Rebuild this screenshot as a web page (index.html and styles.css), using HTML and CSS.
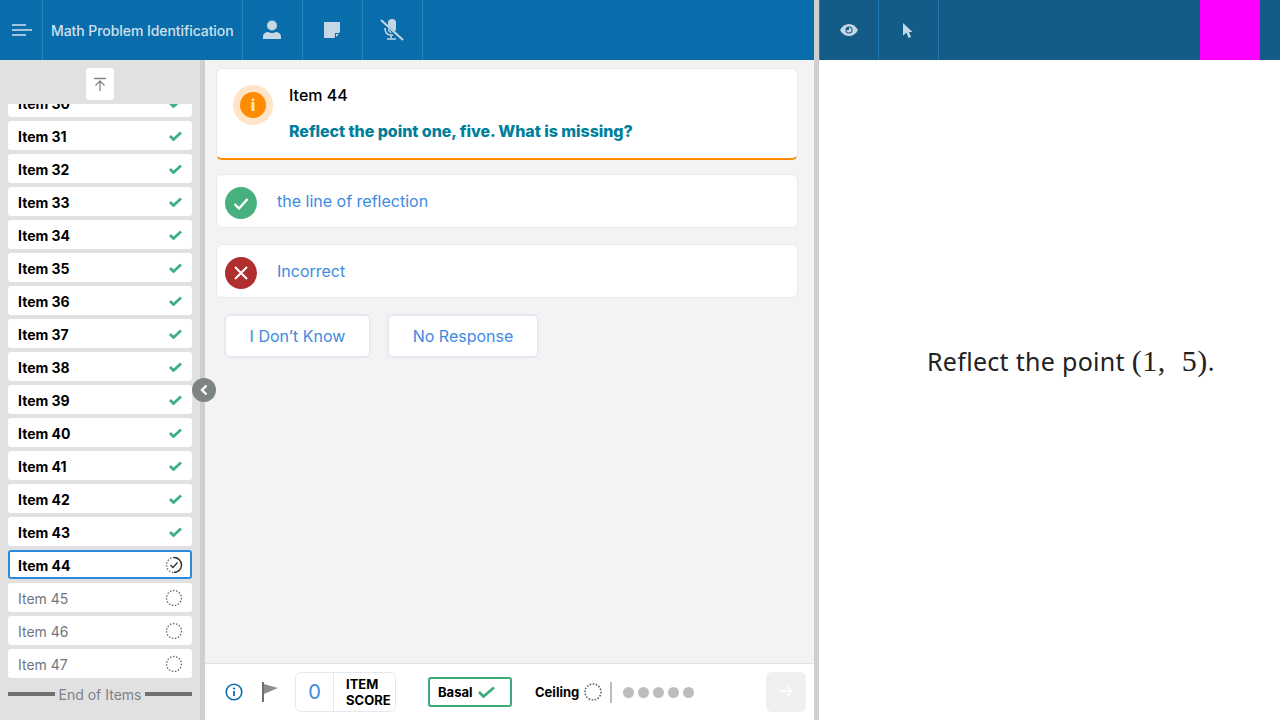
FILE: index.html
```html
<!DOCTYPE html>
<html lang="en">
<head>
  <meta charset="UTF-8" />
  <title>Math Problem Identification</title>
  <link rel="stylesheet" href="styles.css">
</head>
<body>
  <header class="topbar">
    <div class="topbar-left">
      <div class="tool tool-menu">
        <svg width="20" height="12" viewBox="0 0 20 12"><path d="M0 1h14M0 6h20M0 11h14" stroke="#cfe0ec" stroke-width="1.6" fill="none"/></svg>
      </div>
      <div class="app-title">Math Problem Identification</div>
      <div class="tool">
        <svg width="20" height="20" viewBox="0 0 20 20"><circle cx="10" cy="5.5" r="5" fill="#c5d6e4"/><path d="M1 19v-2.500c0-3 3-4.500 5-4.500 2.500 1.300 5.500 1.300 8 0 2 0 5 1.500 5 4.500V19z" fill="#c5d6e4"/></svg>
      </div>
      <div class="tool">
        <svg width="18" height="18" viewBox="0 0 18 18"><path d="M1 1h16v10l-6 6H1z" fill="#c5d6e4"/><path d="M12 17v-5h5z" fill="#0a6dab"/><path d="M13 16v-3h3z" fill="#c5d6e4"/></svg>
      </div>
      <div class="tool">
        <svg width="26" height="24" viewBox="0 0 26 24"><path d="M9 5a4 4 0 0 1 8 0v6a4 4 0 0 1-1 2.500L9 7z" fill="#c5d6e4"/><path d="M9 10v2a4 4 0 0 0 4 3z" fill="#c5d6e4"/><path d="M6 10c0 4 2 7 6 7h2M12 17v3M8 21h9" stroke="#c5d6e4" stroke-width="1.600" fill="none"/><path d="M2 2l22 20" stroke="#c5d6e4" stroke-width="2"/></svg>
      </div>
    </div>
    <div class="bar-gap"></div>
    <div class="topbar-right">
      <div class="tool tool-view">
        <svg width="18" height="12" viewBox="0 0 18 12"><path d="M0 6c2-4 5.500-6 9-6s7 2 9 6c-2 4-5.500 6-9 6s-7-2-9-6z" fill="#c5d6e4"/><circle cx="9" cy="6" r="3.500" fill="#135c88"/><path d="M9 3.500a2.500 2.500 0 1 1-2.500 2.500H9z" fill="#c5d6e4"/></svg>
      </div>
      <div class="tool tool-view">
        <svg width="10" height="15" viewBox="0 0 10 15"><path d="M0 0l9.500 9H6l2 5-2.500 1-2-5.200L0 12.500z" fill="#c5d6e4"/></svg>
      </div>
      <div class="magenta"></div>
    </div>
  </header>

  <div class="workspace">
    <aside class="sidebar">
      <div class="top-row">
        <button class="to-top">
          <svg width="14" height="14" viewBox="0 0 14 14"><path d="M1 1.500h12M7 14V4.500M2.500 8.500L7 4l4.500 4.500" stroke="#858585" stroke-width="1.300" fill="none"/></svg>
        </button>
      </div>
      <div class="item-scroll">
        <ul class="item-list">
          <li class="item done">Item 30<svg class="tick" width="13" height="10" viewBox="0 0 13 10"><path d="M1 5l3.500 3.500L12 1.500" /></svg></li>
          <li class="item done">Item 31<svg class="tick" width="13" height="10" viewBox="0 0 13 10"><path d="M1 5l3.500 3.500L12 1.500" /></svg></li>
          <li class="item done">Item 32<svg class="tick" width="13" height="10" viewBox="0 0 13 10"><path d="M1 5l3.500 3.500L12 1.500" /></svg></li>
          <li class="item done">Item 33<svg class="tick" width="13" height="10" viewBox="0 0 13 10"><path d="M1 5l3.500 3.500L12 1.500" /></svg></li>
          <li class="item done">Item 34<svg class="tick" width="13" height="10" viewBox="0 0 13 10"><path d="M1 5l3.500 3.500L12 1.500" /></svg></li>
          <li class="item done">Item 35<svg class="tick" width="13" height="10" viewBox="0 0 13 10"><path d="M1 5l3.500 3.500L12 1.500" /></svg></li>
          <li class="item done">Item 36<svg class="tick" width="13" height="10" viewBox="0 0 13 10"><path d="M1 5l3.500 3.500L12 1.500" /></svg></li>
          <li class="item done">Item 37<svg class="tick" width="13" height="10" viewBox="0 0 13 10"><path d="M1 5l3.500 3.500L12 1.500" /></svg></li>
          <li class="item done">Item 38<svg class="tick" width="13" height="10" viewBox="0 0 13 10"><path d="M1 5l3.500 3.500L12 1.500" /></svg></li>
          <li class="item done">Item 39<svg class="tick" width="13" height="10" viewBox="0 0 13 10"><path d="M1 5l3.500 3.500L12 1.500" /></svg></li>
          <li class="item done">Item 40<svg class="tick" width="13" height="10" viewBox="0 0 13 10"><path d="M1 5l3.500 3.500L12 1.500" /></svg></li>
          <li class="item done">Item 41<svg class="tick" width="13" height="10" viewBox="0 0 13 10"><path d="M1 5l3.500 3.500L12 1.500" /></svg></li>
          <li class="item done">Item 42<svg class="tick" width="13" height="10" viewBox="0 0 13 10"><path d="M1 5l3.500 3.500L12 1.500" /></svg></li>
          <li class="item done">Item 43<svg class="tick" width="13" height="10" viewBox="0 0 13 10"><path d="M1 5l3.500 3.500L12 1.500" /></svg></li>
          <li class="item current">Item 44
            <svg class="ring" width="18" height="18" viewBox="0 0 18 18"><circle cx="9" cy="9" r="7.500" class="dots"/><path d="M9 1.500a7.500 7.500 0 0 1 0 15" class="arc"/><path d="M5.500 9l2.500 2.500 4.500-5" class="arc"/></svg>
          </li>
          <li class="item">Item 45<svg class="ring" width="18" height="18" viewBox="0 0 18 18"><circle cx="9" cy="9" r="7.500" class="dots"/></svg></li>
          <li class="item">Item 46<svg class="ring" width="18" height="18" viewBox="0 0 18 18"><circle cx="9" cy="9" r="7.500" class="dots"/></svg></li>
          <li class="item">Item 47<svg class="ring" width="18" height="18" viewBox="0 0 18 18"><circle cx="9" cy="9" r="7.500" class="dots"/></svg></li>
        </ul>
      </div>
      <div class="end-row"><span class="end-line"></span>End of Items<span class="end-line"></span></div>
    </aside>

    <div class="v-divider">
      <div class="collapse">
        <svg width="10" height="12" viewBox="0 0 10 12"><path d="M7.500 1.500L3 6l4.500 4.500" stroke="#fff" stroke-width="2.400" fill="none"/></svg>
      </div>
    </div>

    <main class="main">
      <div class="content">
        <section class="question-card">
          <div class="halo"><div class="info-dot">i</div></div>
          <div class="question-text">
            <div class="question-item">Item 44</div>
            <div class="question-prompt">Reflect the point one, five. What is missing?</div>
          </div>
        </section>

        <div class="answer">
          <span class="badge badge-ok">
            <svg width="16" height="13" viewBox="0 0 16 13"><path d="M1.500 7l4.500 4.500L14.500 2" stroke="#fff" stroke-width="2.400" fill="none"/></svg>
          </span>
          the line of reflection
        </div>
        <div class="answer">
          <span class="badge badge-bad">
            <svg width="14" height="14" viewBox="0 0 14 14"><path d="M1 1l12 12M13 1L1 13" stroke="#fff" stroke-width="2" fill="none"/></svg>
          </span>
          Incorrect
        </div>

        <div class="choices">
          <button class="choice choice-a">I Don’t Know</button>
          <button class="choice choice-b">No Response</button>
        </div>
      </div>

      <footer class="footer">
        <svg class="foot-info" width="18" height="18" viewBox="0 0 18 18"><circle cx="9" cy="9" r="7.800" stroke="#0a6dab" stroke-width="1.600" fill="none"/><circle cx="9" cy="5.500" r="1.100" fill="#0a6dab"/><path d="M9 8v5" stroke="#0a6dab" stroke-width="1.800"/></svg>
        <svg class="foot-flag" width="16" height="20" viewBox="0 0 16 20"><path d="M1 0v20" stroke="#6f6f6f" stroke-width="2"/><path d="M2 2l14 4-14 6z" fill="#8f8f8f"/></svg>
        <div class="score-box">
          <div class="score-value">0</div>
          <div class="score-label">ITEM<br>SCORE</div>
        </div>
        <div class="basal">Basal
          <svg width="17" height="12" viewBox="0 0 17 12"><path d="M1 6l4.500 4.500L16 1.500" stroke="#3fa97c" stroke-width="2.800" fill="none"/></svg>
        </div>
        <div class="ceiling">Ceiling
          <svg width="18" height="18" viewBox="0 0 18 18"><circle cx="9" cy="9" r="8" class="dots dots-heavy"/></svg>
        </div>
        <span class="foot-bar"></span>
        <div class="progress-dots"><i></i><i></i><i></i><i></i><i></i></div>
        <button class="next">
          <svg width="14" height="12" viewBox="0 0 14 12"><path d="M0 6h13M8 1l5 5-5 5" stroke="#fff" stroke-width="1.300" fill="none"/></svg>
        </button>
      </footer>
    </main>

    <div class="pane-gap"></div>

    <section class="stimulus">
      <p class="stimulus-text">Reflect the point <span class="math">(1, 5)</span>.</p>
    </section>
  </div>
</body>
</html>
```

FILE: styles.css
```css
* {
  box-sizing: border-box;
}
html, body {
  height: 100%;
}
body {
  margin: 0;
  height: 720px;
  overflow: hidden;
  font-family: Inter, 'Noto Sans', sans-serif;
  background: #fff;
  color: #000;
}
button {
  font-family: inherit;
  padding: 0;
  cursor: pointer;
}

/* top bar */
.topbar {
  display: flex;
  height: 60px;
}
.topbar-left {
  display: flex;
  width: 814px;
  background: #0a6dab;
}
.bar-gap {
  width: 5px;
  background: #cfcfcf;
}
.topbar-right {
  flex: 1;
  display: flex;
  background: #135c88;
  position: relative;
}
.tool {
  width: 60px;
  padding-right: 1px;
  display: flex;
  align-items: center;
  justify-content: center;
  border-right: 1px solid #2a83bb;
}
.tool-menu {
  width: 43px;
  padding: 0 0 0 1px;
}
.app-title {
  width: 200px;
  padding-left: 8px;
  display: flex;
  align-items: center;
  font-size: 14px;
  font-weight: 500;
  letter-spacing: -0.07px;
  color: #cfe0ec;
  white-space: nowrap;
  border-right: 1px solid #2a83bb;
}
.tool-view {
  border-right: 1px solid #1f7ab5;
}
.tool-view:first-child {
  border-left: 1px solid #1f7ab5;
}
.magenta {
  position: absolute;
  right: 20px;
  top: 0;
  width: 60px;
  height: 60px;
  background: #f0f;
}

/* page body */
.workspace {
  display: flex;
  height: 660px;
}
.sidebar {
  width: 200px;
  background: #e1e1e1;
  display: flex;
  flex-direction: column;
}
.top-row {
  height: 44px;
  padding-top: 8px;
  display: flex;
  justify-content: center;
}
.to-top {
  width: 28px;
  height: 32px;
  border: 0;
  border-radius: 3px;
  background: #fff;
  display: flex;
  align-items: center;
  justify-content: center;
}
.item-scroll {
  flex: 1;
  overflow: hidden;
  padding: 0 8px;
}
.item-list {
  list-style: none;
  margin: -16px 0 0;
  padding: 0;
}
.item {
  height: 29px;
  margin-bottom: 4px;
  padding: 1px 9px 0 10px;
  background: #fff;
  border-radius: 3px;
  display: flex;
  align-items: center;
  justify-content: space-between;
  font-size: 14px;
  color: #6f7780;
}
.item svg {
  margin-top: -1px;
}
.done {
  font-weight: 700;
  color: #000;
}
.current {
  font-weight: 700;
  color: #000;
  border: 2px solid #2a8bdc;
  padding: 1px 7px 0 8px;
}
.tick {
  margin-right: 1px;
}
.tick path {
  stroke: #3fb082;
  stroke-width: 2.800;
  fill: none;
}
.dots {
  fill: none;
  stroke: #666;
  stroke-width: 1.300;
  stroke-dasharray: 1.500 1.600;
}
.dots-heavy {
  stroke: #555;
  stroke-width: 1.500;
}
.arc {
  fill: none;
  stroke: #333;
  stroke-width: 1.400;
}
.end-row {
  height: 35px;
  padding: 0 8px 17px;
  display: flex;
  align-items: center;
  justify-content: space-between;
  font-size: 14px;
  color: #7b8288;
}
.end-line {
  width: 47px;
  height: 4px;
  background: #6c706f;
}
.v-divider {
  width: 5px;
  background: #cfcfcf;
  position: relative;
}
.collapse {
  position: absolute;
  left: -8px;
  top: 318px;
  width: 24px;
  height: 24px;
  border-radius: 50%;
  background: #7e8383;
  display: flex;
  align-items: center;
  justify-content: center;
}

/* question column */
.main {
  width: 609px;
  background: #f3f3f4;
  display: flex;
  flex-direction: column;
}
.content {
  flex: 1;
  padding: 8px 16px 0 11px;
}
.question-card {
  height: 92px;
  background: #fff;
  border: 1px solid #e4e8f0;
  border-bottom: 2px solid #ff8c00;
  border-radius: 6px;
  padding: 16px 16px 0;
  display: flex;
  gap: 16px;
}
.halo {
  width: 40px;
  height: 40px;
  border-radius: 50%;
  background: #ffe4c8;
  display: flex;
  align-items: center;
  justify-content: center;
}
.info-dot {
  width: 26px;
  height: 26px;
  border-radius: 50%;
  background: #ff8c00;
  color: #ffe4c8;
  font-size: 16px;
  font-weight: 800;
  text-align: center;
  line-height: 26px;
}
.question-item {
  font-size: 16px;
  font-weight: 500;
  line-height: 20px;
}
.question-prompt {
  margin-top: 16px;
  font-size: 16px;
  font-weight: 800;
  letter-spacing: -0.05px;
  line-height: 20px;
  color: #007f9b;
}
.answer {
  height: 54px;
  margin-top: 14px;
  background: #fff;
  border: 1px solid #e4e8f0;
  border-radius: 6px;
  padding-left: 8px;
  display: flex;
  align-items: center;
  gap: 20px;
  font-size: 16px;
  color: #3d8ae0;
}
.answer + .answer {
  margin-top: 16px;
}
.badge {
  width: 32px;
  height: 32px;
  margin-top: 4px;
  border-radius: 50%;
  display: flex;
  align-items: center;
  justify-content: center;
}
.badge-ok {
  background: #47b07f;
}
.badge-bad {
  background: #b02e2e;
}
.choices {
  display: flex;
  gap: 16px;
  margin-top: 16px;
  padding-left: 8px;
}
.choice {
  height: 44px;
  background: #fff;
  border: 2px solid #e4e8f3;
  border-radius: 6px;
  font-size: 16px;
  color: #3d8ae0;
}
.choice-a {
  width: 147px;
}
.choice-b {
  width: 152px;
}

/* footer */
.footer {
  height: 57px;
  background: #fff;
  border-top: 1px solid #e2e2e2;
  display: flex;
  align-items: center;
  padding: 0 8px 0 20px;
}
.foot-flag {
  margin-left: 19px;
}
.score-box {
  display: flex;
  margin-left: 17px;
  width: 101px;
  height: 40px;
  border: 1px solid #e4e8f3;
  border-radius: 6px;
}
.score-value {
  width: 38px;
  border-right: 1px solid #e4e8f3;
  text-align: center;
  line-height: 38px;
  font-size: 20px;
  color: #3d8ae0;
}
.score-label {
  padding: 3px 0 0 12px;
  font-size: 13px;
  font-weight: 700;
  line-height: 16px;
}
.basal {
  margin-left: 32px;
  width: 84px;
  height: 30px;
  border: 2px solid #3fa97c;
  border-radius: 3px;
  padding-left: 8px;
  display: flex;
  align-items: center;
  gap: 5px;
  font-size: 13px;
  font-weight: 700;
}
.ceiling {
  margin-left: 23px;
  display: flex;
  align-items: center;
  gap: 5px;
  font-size: 13px;
  font-weight: 700;
}
.foot-bar {
  width: 2px;
  height: 21px;
  margin-left: 8px;
  background: #bdbdbd;
}
.progress-dots {
  display: flex;
  gap: 4px;
  margin-left: 11px;
}
.progress-dots i {
  width: 11px;
  height: 11px;
  border-radius: 50%;
  background: #bdbdbd;
}
.next {
  margin-left: auto;
  width: 40px;
  height: 40px;
  border: 0;
  border-radius: 6px;
  background: #f0f0f0;
}

/* stimulus pane */
.pane-gap {
  width: 5px;
  background: #cfcfcf;
}
.stimulus {
  flex: 1;
  background: #fff;
  padding: 283px 0 0 108px;
}
.stimulus-text {
  margin: 0;
  font-family: 'Noto Sans', sans-serif;
  font-size: 25px;
  letter-spacing: 0.3px;
  line-height: 36px;
  color: #222;
  white-space: nowrap;
}
.math {
  font-family: 'Liberation Serif', serif;
  font-size: 30px;
  letter-spacing: 0.5px;
  word-spacing: 8px;
}
```
